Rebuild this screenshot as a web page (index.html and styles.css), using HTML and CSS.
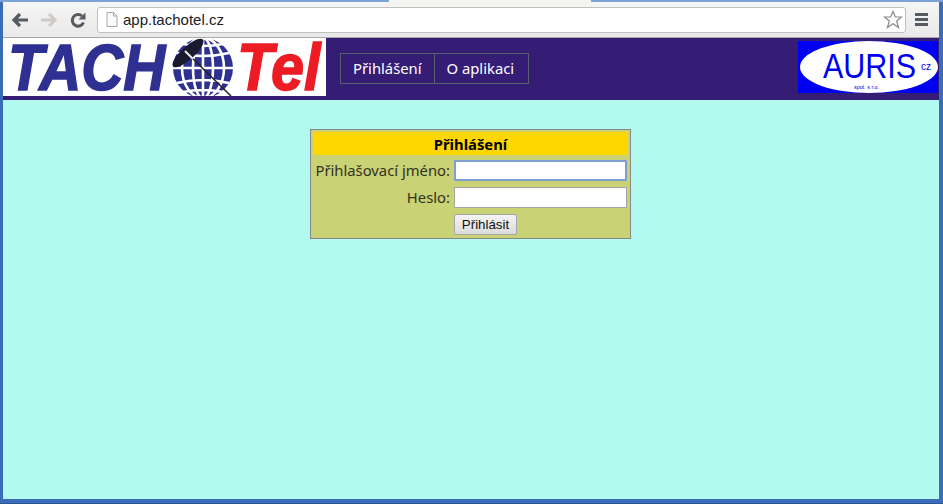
FILE: index.html
```html
<!DOCTYPE html>
<html lang="cs">
<head>
    <meta charset="UTF-8">
    <title>app.tachotel.cz</title>
    <link rel="stylesheet" href="styles.css">
</head>
<body>
    <div class="window">
        <div class="tabstrip">
            <div class="tab-edge tab-left"></div>
            <div class="tab-active"></div>
            <div class="tab-edge tab-right"></div>
        </div>
        <div class="toolbar">
            <svg class="tool" width="18" height="16" viewBox="0 0 18 16"><path d="M9 2 3 8 9 14M4 8H17" fill="none" stroke="#555b60" stroke-width="3.200"/></svg>
            <svg class="tool" width="18" height="16" viewBox="0 0 18 16"><path d="M9 2 15 8 9 14M14 8H1" fill="none" stroke="#cfc9c9" stroke-width="3"/></svg>
            <svg class="tool" width="18" height="18" viewBox="0 0 18 18"><path d="M14.500 11.500A5.800 5.800 0 1 1 13 5" fill="none" stroke="#555b60" stroke-width="3"/><path d="M16.500 1.500V8.500H9.500Z" fill="#555b60"/></svg>
            <div class="omnibox">
                <svg width="12" height="15" viewBox="0 0 12 15"><path d="M1 .5H7.500L11 4V14.500H1ZM7.500 .5V4H11" fill="#fafafa" stroke="#a8a8a8"/></svg>
                <span class="url">app.tachotel.cz</span>
                <svg class="star" width="20" height="19" viewBox="0 0 20 19"><path d="M10 1.500 12.400 7H18.500L13.700 11 15.500 17.500 10 13.800 4.500 17.500 6.300 11 1.500 7H7.600Z" fill="#fbfbfb" stroke="#8a8a8a" stroke-width="1.200"/></svg>
            </div>
            <div class="menu-btn"><span></span><span></span><span></span></div>
        </div>
        <div class="page">
            <div class="header">
                <svg class="logo" width="323" height="58" viewBox="0 0 323 58">
                    <rect width="323" height="58" fill="#fff"/>
                    <text class="logo-tach" transform="translate(5 52) scale(.91 1)">TACH</text>
                    <circle cx="200" cy="30" r="30" fill="#2e3192"/>
                    <g fill="none" stroke="#fff" stroke-width="2.600">
                        <ellipse cx="200" cy="30" rx="10" ry="30"/>
                        <ellipse cx="200" cy="30" rx="21" ry="30"/>
                        <path d="M200 0V60M170 30H230M174 15Q200 21 226 15M174 45Q200 39 226 45M180 6Q200 10 220 6M180 54Q200 50 220 54"/>
                    </g>
                    <ellipse cx="185" cy="15" rx="20" ry="6.500" transform="rotate(-42 185 15)" fill="#1a1a2e"/>
                    <path d="M184 15 228 58" stroke="#222" stroke-width="1.500"/>
                    <path d="M182 13 190 21" stroke="#eee" stroke-width="2"/>
                    <text class="logo-tel" transform="translate(234 52) scale(.9 1)">Tel</text>
                </svg>
                <nav class="nav">
                    <a class="nav-item" href="#">Přihlášení</a>
                    <a class="nav-item" href="#">O aplikaci</a>
                </nav>
                <svg class="auris" width="140" height="52" viewBox="0 0 140 52">
                    <rect width="140" height="52" fill="#0000f0"/>
                    <ellipse cx="71" cy="26" rx="69" ry="26" fill="#fff"/>
                    <text class="auris-name" transform="translate(25 37) scale(.87 1)">AURIS</text>
                    <text class="auris-cz" x="123" y="29">cz</text>
                    <text class="auris-sro" x="56" y="48">spol. s r.o.</text>
                </svg>
            </div>
            <div class="content">
                <form class="login">
                    <h3 class="login-title">Přihlášení</h3>
                    <div class="login-grid">
                        <label for="user">Přihlašovací jméno:</label>
                        <input class="focused" type="text" id="user">
                        <label for="pass">Heslo:</label>
                        <input type="password" id="pass">
                        <span></span>
                        <button type="button">Přihlásit</button>
                    </div>
                </form>
            </div>
        </div>
    </div>
</body>
</html>
```

FILE: styles.css
```css
* {
    margin: 0;
    padding: 0;
    box-sizing: border-box;
}

html, body {
    height: 100%;
    overflow: hidden;
}

body {
    font-family: "Noto Sans", sans-serif;
    background: #3a6cb8;
}

.window {
    height: 504px;
    display: flex;
    flex-direction: column;
    padding: 0 4px 4px 3px;
    border-bottom: 1px solid #2a5596;
    background: #3a6cb8;
}

.tabstrip {
    display: flex;
    height: 2px;
    margin: 0 -4px 0 -3px;
}

.tab-edge {
    background: #7ba3d8;
}

.tab-left {
    width: 389px;
}

.tab-active {
    width: 202px;
    background: #f5f5f4;
}

.tab-right {
    flex: 1;
}

/* browser bar */
.toolbar {
    height: 36px;
    display: flex;
    align-items: center;
    padding: 0 5px 0 8px;
    background: linear-gradient(#f5f5f4, #e9e9e9);
    border-bottom: 1px solid #a9a9a9;
}

.tool {
    margin-right: 11px;
    flex: none;
}

.omnibox {
    width: 809px;
    height: 26px;
    margin: 0 0 0 -1px;
    display: flex;
    align-items: center;
    gap: 5px;
    padding: 0 2px 0 8px;
    background: #fff;
    border: 1px solid #c0c0c0;
    border-radius: 3px;
}

.url {
    flex: 1;
    font: 15px "Liberation Sans", sans-serif;
    color: #222;
}

.menu-btn {
    margin-left: 9px;
    display: flex;
    flex-direction: column;
    gap: 2px;
}

.menu-btn span {
    display: block;
    width: 13px;
    height: 3px;
    background: #555b60;
}

/* page */
.page {
    flex: 1;
    display: flex;
    flex-direction: column;
    background: #b2f9f0;
}

.header {
    height: 62px;
    display: flex;
    align-items: flex-start;
    background: #351d75;
}

.logo {
    flex: none;
    display: block;
}

.logo-tach {
    font: italic bold 64px "Liberation Sans", sans-serif;
    fill: #2e3192;
    stroke: #2e3192;
    stroke-width: 1.500px;
}

.logo-tel {
    font: italic bold 66px "Liberation Sans", sans-serif;
    fill: #ed1c24;
    stroke: #ed1c24;
    stroke-width: 1.500px;
}

.nav {
    display: flex;
    width: 189px;
    margin: 15px 0 0 14px;
    border: 1px solid #56606e;
}

.nav-item {
    display: block;
    height: 29px;
    line-height: 28px;
    padding: 0 12px;
    font-size: 14.800px;
    color: #fff;
    text-decoration: none;
}

.nav-item + .nav-item {
    border-left: 1px solid #56606e;
}

.auris {
    flex: none;
    display: block;
    margin: 3px 1px 0 auto;
}

.auris-name {
    font: 35px "Liberation Sans", sans-serif;
    fill: #0000f0;
}

.auris-cz {
    font: 10px "Liberation Sans", sans-serif;
    fill: #0000f0;
}

.auris-sro {
    font: 5.500px "Liberation Sans", sans-serif;
    fill: #0000f0;
}

.content {
    flex: 1;
    padding: 29px 0 0 307px;
}

/* login box */
.login {
    width: 321px;
    height: 110px;
    padding: 2px;
    background: #c9d375;
    border: 1px solid #888;
}

.login-title {
    height: 23px;
    line-height: 24px;
    text-align: center;
    font-size: 14.800px;
    font-weight: 700;
    color: #000;
    background: #ffd700;
}

.login-grid {
    display: grid;
    grid-template-columns: 137px 173px;
    grid-auto-rows: 21px;
    row-gap: 6px;
    column-gap: 4px;
    margin: 5px 0 0 0;
    font-size: 14.800px;
    color: #33301f;
}

.login-grid label {
    text-align: right;
    line-height: 21px;
    white-space: nowrap;
}

.login-grid input {
    width: 173px;
    height: 21px;
    background: #fff;
    border: 1px solid #a5a5a5;
    outline: none;
}

.login-grid input.focused {
    border: 2px solid #7f9fd0;
    border-radius: 1px;
}

.login-grid button {
    width: 63px;
    height: 21px;
    font: 13.300px "Liberation Sans", sans-serif;
    color: #111;
    background: linear-gradient(#f4f4f4, #dcdcdc);
    border: 1px solid #a5a5a5;
    border-radius: 2px;
}
```
